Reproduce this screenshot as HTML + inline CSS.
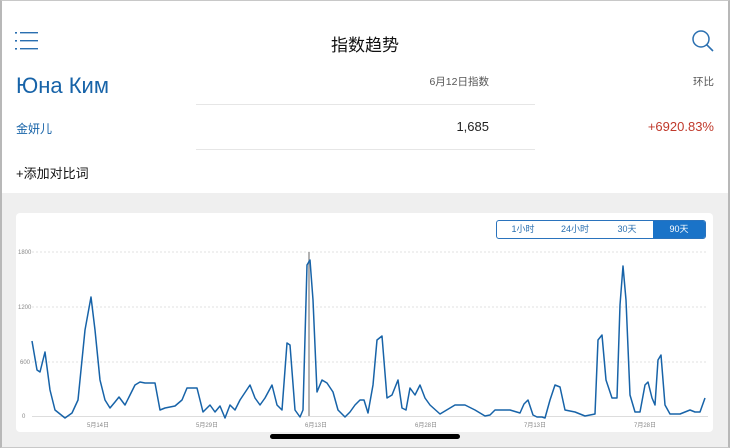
<!DOCTYPE html>
<html><head><meta charset="utf-8"><style>
*{margin:0;padding:0;box-sizing:border-box}
body{width:730px;height:448px;overflow:hidden;background:#fff;font-family:"Liberation Sans","Noto Sans CJK SC",sans-serif;position:relative}
.frame{position:absolute;left:0;top:0;width:730px;height:448px;border:2px solid #b8b8b8;border-top:1px solid #c8c8c8;border-bottom:1px solid #c8c8c8;pointer-events:none;z-index:9}
.abs{position:absolute}
.gray{position:absolute;left:2px;right:2px;top:193px;bottom:1px;background:#efefef}
.card{position:absolute;left:16px;top:213px;width:697px;height:219px;background:#fff;border-radius:4px}
.seg{position:absolute;left:496px;top:220px;width:210px;height:19px;border:1px solid #2a73bd;border-radius:3px;display:flex;font-size:9px;color:#2a6fb0;overflow:hidden}
.seg div{flex:1;text-align:center;line-height:17px}
.seg .on{background:#1a73c8;color:#fff;flex:0 0 52px}
</style></head><body>
<div class="frame"></div>
<svg class="abs" style="left:15px;top:31px" width="24" height="20" viewBox="0 0 24 20">
<g fill="#2a6fb0"><rect x="0" y="1" width="2" height="1.6"/><rect x="0" y="9" width="2" height="1.6"/><rect x="0" y="17" width="2" height="1.6"/>
<rect x="5" y="1" width="18" height="1.4"/><rect x="5" y="9" width="18" height="1.4"/><rect x="5" y="17" width="18" height="1.4"/></g></svg>
<div class="abs" style="left:0;width:730px;top:31px;text-align:center;font-size:17px;color:#111">指数趋势</div>
<svg class="abs" style="left:691px;top:29px" width="24" height="24" viewBox="0 0 24 24"><circle cx="10" cy="10" r="8" fill="none" stroke="#2a6fb0" stroke-width="1.5"/><line x1="15.8" y1="15.8" x2="22" y2="22" stroke="#2a6fb0" stroke-width="1.6"/></svg>
<div class="abs" style="left:16px;top:73px;font-size:22px;color:#1763a8">Юна Ким</div>
<div class="abs" style="right:241px;top:74px;font-size:10.5px;color:#555">6月12日指数</div>
<div class="abs" style="right:16px;top:74px;font-size:10.5px;color:#555">环比</div>
<div class="abs" style="left:196px;top:104px;width:339px;height:1px;background:#e6e6e6"></div>
<div class="abs" style="left:16px;top:120px;font-size:12px;color:#1763a8">金妍儿</div>
<div class="abs" style="right:241px;top:119px;font-size:13px;color:#222">1,685</div>
<div class="abs" style="right:16px;top:119px;font-size:13px;color:#c0392b">+6920.83%</div>
<div class="abs" style="left:196px;top:149px;width:339px;height:1px;background:#e6e6e6"></div>
<div class="abs" style="left:16px;top:163px;font-size:13px;color:#111">+添加对比词</div>
<div class="gray"></div>
<div class="card"></div>
<div class="seg"><div>1小时</div><div>24小时</div><div>30天</div><div class="on">90天</div></div>
<svg class="abs" style="left:0;top:0" width="730" height="448">
<g stroke="#e2e2e2" stroke-dasharray="2,2" stroke-width="1"><line x1="32" y1="252" x2="708" y2="252"/><line x1="32" y1="307" x2="708" y2="307"/><line x1="32" y1="362" x2="708" y2="362"/></g>
<line x1="32" y1="416.5" x2="708" y2="416.5" stroke="#ddd"/>
<g font-size="6" fill="#888" font-family="Liberation Sans,Noto Sans CJK SC,sans-serif"><text x="18" y="254">1800</text><text x="18" y="309">1200</text><text x="20" y="364">600</text><text x="22" y="418">0</text>
<g text-anchor="middle"><text x="98" y="427">5月14日</text><text x="207" y="427">5月29日</text><text x="316" y="427">6月13日</text><text x="426" y="427">6月28日</text><text x="535" y="427">7月13日</text><text x="645" y="427">7月28日</text></g></g>
<line x1="309" y1="252" x2="309" y2="416" stroke="#999" stroke-width="1.5"/>
<polyline fill="none" stroke="#1763a8" stroke-width="1.5" stroke-linejoin="round" points="32,341 37,370 40,372 45,352 50,390 55,410 65,418 72,413 78,400 85,330 91,297 95,330 100,380 105,400 110,408 115,402 119,397 125,405 130,395 135,385 140,382 145,383 155,383 160,410 165,408 175,406 182,400 187,388 192,388 197,388 203,412 210,405 215,412 220,406 225,418 230,405 235,410 240,400 250,385 255,398 260,405 265,398 272,385 277,405 282,410 287,343 290,345 295,410 300,417 303,410 307,265 310,260 313,300 317,392 322,380 327,383 333,392 338,410 345,417 350,412 355,405 360,400 364,400 368,413 373,385 377,340 382,336 387,398 392,395 398,380 402,408 406,410 410,388 415,395 420,385 425,398 430,405 440,414 455,405 465,405 475,410 485,416 490,415 495,410 510,410 520,413 524,404 528,400 533,415 537,417 542,417 545,418 550,400 555,385 560,387 565,410 575,412 585,416 595,414 598,340 602,335 606,380 612,398 617,398 620,305 623,266 626,300 630,395 635,412 640,412 645,385 648,382 652,398 655,405 658,360 661,355 665,405 670,414 680,414 690,410 695,412 700,412 705,398"/>
<rect x="270" y="434" width="190" height="5" rx="2.5" fill="#000"/>
</svg>
</body></html>
